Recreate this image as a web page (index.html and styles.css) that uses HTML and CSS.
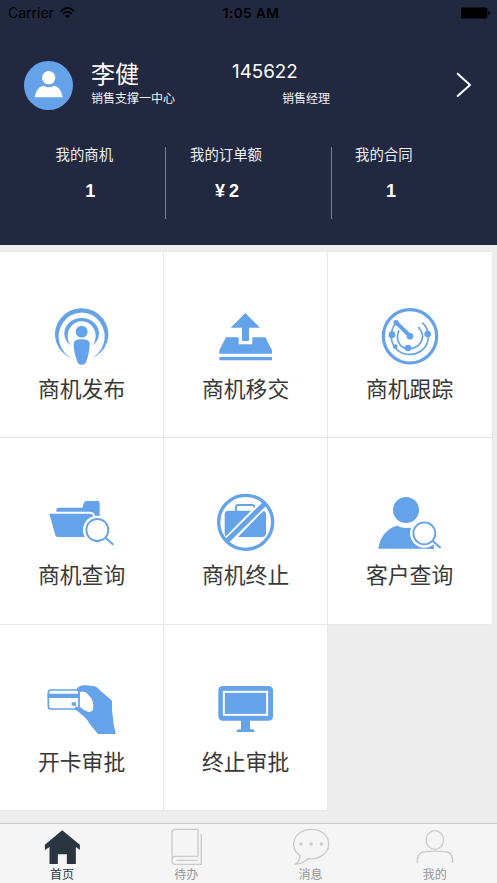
FILE: index.html
```
<!DOCTYPE html>
<html lang="zh-CN">
<head>
<meta charset="utf-8">
<meta name="viewport" content="width=device-width, initial-scale=1">
<title>首页</title>
<link rel="stylesheet" href="styles.css">
</head>
<body>
<div class="app">
  <header class="header">
    <div class="status">
      <div class="carrier"><span>Carrier</span>
        <svg class="wifi" viewBox="0 0 45 36"><path d="M2 13Q22.500 -7 43 13" stroke-width="5"/><path d="M9 21Q22.500 8 36 21" stroke-width="5"/><path class="dot" d="M15 27Q22.500 20 30 27L22.500 34Z"/></svg>
      </div>
      <div class="time">1:05 AM</div>
      <svg class="battery" viewBox="0 0 88 36"><rect x="0" y="1" width="80" height="34" rx="5"/><path d="M82 12Q88 13 88 18T82 24Z"/></svg>
    </div>
    <div class="profile">
      <svg class="avatar" viewBox="0 0 147 147"><circle class="disc" cx="73.500" cy="73.500" r="73.500"/><circle cx="74" cy="50" r="20"/><path d="M32 109C35 90 45 76 58 74Q74 83 90 74C104 76 113 90 116 109Z"/></svg>
      <div class="who"><div class="name">李健</div><div class="sub">销售支撑一中心</div></div>
      <div class="job"><div class="number">145622</div><div class="sub role">销售经理</div></div>
      <svg class="chevron" viewBox="0 0 48 78"><path d="M5 5L42 39L5 72"/></svg>
    </div>
    <div class="stats">
      <div class="stat first"><div class="stat-label">我的商机</div><div class="stat-value">1</div></div>
      <div class="stat second"><div class="stat-label">我的订单额</div><div class="stat-value"><span class="yen">¥</span>2</div></div>
      <div class="stat third"><div class="stat-label">我的合同</div><div class="stat-value">1</div></div>
    </div>
  </header>
  <main class="grid">
    <div class="tile">
      <svg class="icon" viewBox="123 42 246 210"><path d="M221 207A80 78 0 1 1 269 207A69 72 0 1 0 221 207Z"/><path d="M213 167A52 46.300 0 1 1 277 167A42 44.500 0 1 0 213 167Z"/><circle cx="245" cy="125" r="18"/><path class="gap" d="M216 158Q218 143 245 143T274 158Q274 190 262 228H228Q216 190 216 158Z"/><path d="M221 160Q222 148 245 148T269 160Q269 188 258 217Q256 224 245 224T233 217Q221 188 221 160Z"/></svg>
      <div class="label">商机发布</div>
    </div>
    <div class="tile">
      <svg class="icon" viewBox="120 42 246 210"><path d="M241 69L285 113H252V153H231V113H197ZM183 142H221V163H262V142H301L321 181V191H163V181ZM163 201H321V211H163Z"/></svg>
      <div class="label">商机移交</div>
    </div>
    <div class="tile">
      <svg class="icon" viewBox="123 42 246 210"><circle class="line" cx="246" cy="139" r="80" stroke-width="9.500"/><path class="line" stroke-width="5" d="M204 99C181 126 188 165 209 181C232 199 267 197 287 176C308 153 305 119 283 98"/><path class="line" stroke-width="5" d="M213 121C201 147 214 175 240 176C272 178 292 148 280 124L271 111"/><path class="line round" stroke-width="12" d="M205 98L246 138"/><circle cx="246" cy="139" r="10"/><circle cx="204" cy="98" r="8"/><circle cx="192" cy="134" r="10"/><circle cx="299" cy="132" r="10"/><circle cx="240" cy="174" r="10"/><circle cx="202" cy="170" r="7"/></svg>
      <div class="label">商机跟踪</div>
    </div>
    <div class="tile">
      <svg class="icon" viewBox="123 30 246 210"><path d="M169 95V89Q169 84 175 83H247L252 68Q254 63 260 63H292Q299 63 299 70V120H285V109Q284 96 271 95Z"/><path d="M148 101H271Q279 101 280 111L284 171H173Q168 171 166 166Z"/><circle class="gap" cx="292" cy="150" r="43"/><circle class="line" cx="292" cy="150" r="33" stroke-width="5.500"/><path class="line" stroke-width="6" d="M317 174L340 194"/></svg>
      <div class="label">商机查询</div>
    </div>
    <div class="tile">
      <svg class="icon" viewBox="120 30 246 210"><path class="line" stroke-width="6" d="M213 96V82Q213 75 220 75H262Q268 75 269 84"/><rect x="179" y="92" width="124" height="79" rx="11"/><path class="gap-line" stroke-width="27" d="M185 186L299 70"/><circle class="line" cx="242" cy="127" r="81" stroke-width="10"/><path class="line" stroke-width="15" d="M185 184L299 71"/></svg>
      <div class="label">商机终止</div>
    </div>
    <div class="tile">
      <svg class="icon" viewBox="123 30 246 210"><circle cx="234" cy="90" r="39"/><path d="M151 206C155 174 175 145 207 137Q231 150 258 140C290 145 318 171 318 206Z"/><circle class="gap" cx="289" cy="160" r="43"/><circle class="line" cx="289" cy="160" r="33" stroke-width="5.500"/><path class="line" stroke-width="6" d="M313 182L338 204"/><path d="M296 206Q306 205 316 197L318 206Z"/></svg>
      <div class="label">客户查询</div>
    </div>
    <div class="tile">
      <svg class="icon" viewBox="123 21 246 210"><rect class="line" x="145" y="60" width="92" height="57" rx="8" stroke-width="5"/><path d="M143 71H239V84H143ZM215 97H228V107H215Z"/><path d="M229 58C235 47 247 44 260 46L282 49C290 51 295 54 301 62L335 91Q337 97 336 121L341 162L347 192H294Q283 179 270 163C264 149 249 137 239 128L224 118L227 109L239 113V65Z"/><path class="gap" d="M240 66Q256 61 267 77C277 87 282 98 279 118Q277 126 266 126Q252 123 240 111Z"/></svg>
      <div class="label">开卡审批</div>
    </div>
    <div class="tile">
      <svg class="icon" viewBox="120 21 246 210"><rect x="160" y="48" width="164" height="104" rx="13"/><rect class="gap-line" x="176.500" y="65.500" width="130" height="69" stroke-width="6"/><path d="M228 150H255V178H264Q268 180 269 186H214Q215 180 220 178H228Z"/></svg>
      <div class="label">终止审批</div>
    </div>
  </main>
  <nav class="tabs">
    <div class="tab active"><svg viewBox="126.400 69 120 120"><path d="M187 82L240 125V141L228 132V183H201V154H174V183H149V132L135 141V125Z"/></svg><span>首页</span></div>
    <div class="tab"><svg viewBox="499 69 120 120"><path d="M595 160V79H527Q517 79 517 89V174Q517 184 527 184H605V93M517 171Q517 160 527 160H595M530 172H594"/></svg><span>待办</span></div>
    <div class="tab"><svg viewBox="872 69 120 120"><path d="M899 158C862 133 881 79 933 79C963 79 985 97 985 124C985 151 956 171 923 167Q908 183 886 183Q899 173 899 158Z"/><g class="dots"><circle cx="902" cy="123" r="5"/><circle cx="932" cy="123" r="5"/><circle cx="963" cy="123" r="5"/></g></svg><span>消息</span></div>
    <div class="tab"><svg viewBox="1244.600 69 120 120"><ellipse cx="1304" cy="111" rx="26" ry="28"/><path d="M1252 180V169Q1253 146 1277 146Q1304 143 1331 146Q1356 146 1357 169V180"/></svg><span>我的</span></div>
  </nav>
</div>
</body>
</html>
```
FILE: styles.css
```
* { box-sizing: border-box; }
body {
  margin: 0;
  background: #ededed;
  font-family: "Liberation Sans", "Noto Sans CJK SC", sans-serif;
}
svg { display: block; flex: none; }
.app { display: flex; flex-direction: column; height: 883px; overflow: hidden; }

.header { height: 245px; flex: none; background: #212840; color: #fff; }
.status {
  display: grid;
  grid-template-columns: 1fr auto 1fr;
  align-items: center;
  height: 26px;
  padding: 0 7px 0 8px;
  color: #000;
  font: 14px/26px Inter, sans-serif;
}
.carrier { display: flex; align-items: center; gap: 6px; }
.wifi { width: 15px; height: 12px; fill: none; stroke: #000; }
.wifi .dot { fill: #000; stroke: none; }
.time { font-weight: 600; font-size: 13.5px; letter-spacing: 0.5px; padding-left: 4px; }
.battery { width: 29px; height: 12px; justify-self: end; }

.profile { display: flex; height: 111px; padding: 35px 25px 0 24px; }
.avatar { width: 49px; height: 49px; fill: #fff; }
.avatar .disc { fill: #64a2ea; }
.who { width: 141px; margin-left: 18px; padding-top: 1px; }
.name { font-size: 24px; line-height: 26px; }
.sub { font-size: 12px; line-height: 16px; margin-top: 2px; color: #f2f3f5; }
.name + .sub { margin-top: 3px; }
.job { flex: 1; }
.number { font: 18.8px/21px Inter, sans-serif; }
.role { margin-top: 9px; padding-left: 50px; }
.chevron { width: 16px; height: 26px; margin-top: 11px; fill: none; stroke: #fff; stroke-width: 6; stroke-linecap: round; stroke-linejoin: round; }

.stats { display: grid; grid-template-columns: 165px 166px 166px; height: 72px; margin-top: 10px; }
.stat { display: flex; flex-direction: column; width: max-content; text-align: center; }
.stat + .stat { width: auto; border-left: 1px solid #7a7f8d; align-items: flex-start; }
.first { padding-left: 55.5px; }
.second { padding-left: 24px; }
.third { padding-left: 23px; }
.stat-label { font-size: 14.4px; line-height: 16px; color: #eceef2; }
.stat-value { margin-top: 18px; padding-left: 12px; font-size: 18px; line-height: 20px; font-weight: bold; }
.second .stat-value { padding-left: 25px; }
.third .stat-value { padding-left: 31px; }
.yen { margin-right: 4px; }

.grid {
  display: grid;
  grid-template-columns: 163px 163px 164px;
  grid-template-rows: 185px 186px 185px;
  gap: 1px;
  margin-top: 7px;
}
.tile {
  display: flex;
  flex-direction: column;
  align-items: flex-start;
  padding: 52px 0 0 41px;
  background: #fff;
  box-shadow: 0 0 1px #ddd;
}
.icon { width: 82px; height: 70px; fill: #64a2ea; }
.icon .line { fill: none; stroke: #64a2ea; }
.icon .round { stroke-linecap: round; }
.icon .gap { fill: #fff; }
.icon .gap-line { fill: none; stroke: #fff; }
.label { margin: 1px 0 0 -3px; font-size: 21.8px; line-height: 30px; color: #383838; white-space: nowrap; }

.tabs {
  display: grid;
  grid-template-columns: repeat(4, 1fr);
  height: 60px;
  margin-top: auto;
  background: #f5f5f5;
  border-top: 1px solid #cbcccc;
}
.tab { display: flex; flex-direction: column; align-items: center; padding-top: 2px; color: #969696; font-size: 12px; line-height: 18px; }
.tab svg { width: 40px; height: 40px; fill: none; stroke: #cacaca; stroke-width: 4; }
.tab .dots { fill: #cacaca; stroke: none; }
.tab.active { color: #2b3540; }
.tab.active svg { fill: #2b3540; stroke: none; }
```
